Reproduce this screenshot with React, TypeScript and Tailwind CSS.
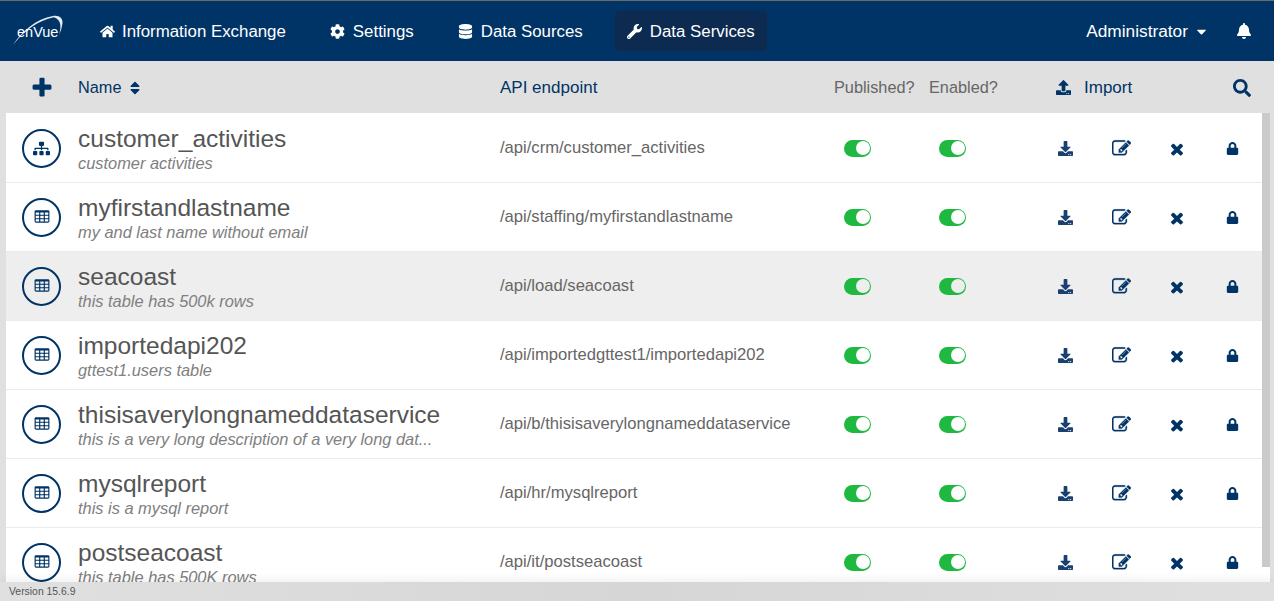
import { FaHome, FaCog, FaDatabase, FaWrench, FaBell, FaSort, FaSearch, FaUpload, FaDownload, FaLock, FaSitemap, FaCaretDown } from "react-icons/fa";

const services = [
  { name: "customer_activities", desc: "customer activities", path: "/api/crm/customer_activities", tree: true },
  { name: "myfirstandlastname", desc: "my and last name without email", path: "/api/staffing/myfirstandlastname" },
  { name: "seacoast", desc: "this table has 500k rows", path: "/api/load/seacoast", active: true },
  { name: "importedapi202", desc: "gttest1.users table", path: "/api/importedgttest1/importedapi202" },
  { name: "thisisaverylongnameddataservice", desc: "this is a very long description of a very long dat...", path: "/api/b/thisisaverylongnameddataservice" },
  { name: "mysqlreport", desc: "this is a mysql report", path: "/api/hr/mysqlreport" },
  { name: "postseacoast", desc: "this table has 500K rows", path: "/api/it/postseacoast" },
];

// older font awesome glyphs, the current packages draw these differently
function Glyph({ d, className }: { d: string; className: string }) {
  return (
    <svg viewBox="0 0 1792 1792" fill="currentColor" className={className}>
      <path d={d} />
    </svg>
  );
}

const plusPath = "M1600 736v192q0 40-28 68t-68 28h-416v416q0 40-28 68t-68 28h-192q-40 0-68-28t-28-68v-416h-416q-40 0-68-28t-28-68v-192q0-40 28-68t68-28h416v-416q0-40 28-68t68-28h192q40 0 68 28t28 68v416h416q40 0 68 28t28 68z";
const timesPath = "M1490 1322q0 40-28 68l-136 136q-28 28-68 28t-68-28l-294-294-294 294q-28 28-68 28t-68-28l-136-136q-28-28-28-68t28-68l294-294-294-294q-28-28-28-68t28-68l136-136q28-28 68-28t68 28l294 294 294-294q28-28 68-28t68 28l136 136q28 28 28 68t-28 68l-294 294 294 294q28 28 28 68z";
const editPath = "M888 1184l116-116-152-152-116 116v56h96v96h56zm440-720q-16-16-33 1l-350 350q-17 17-1 33t33-1l350-350q17-17 1-33zm80 594v190q0 119-84.5 203.5t-203.5 84.5h-832q-119 0-203.5-84.5t-84.5-203.5v-832q0-119 84.5-203.5t203.5-84.5h832q63 0 117 25 15 7 18 23 3 17-9 29l-49 49q-14 14-32 8-23-6-45-6h-832q-66 0-113 47t-47 113v832q0 66 47 113t113 47h832q66 0 113-47t47-113v-126q0-13 9-22l64-64q15-15 35-7t20 29zm-96-738l288 288-672 672h-288v-288zm444 132l-92 92-288-288 92-92q28-28 68-28t68 28l152 152q28 28 28 68t-28 68z";
const tablePath = "M576 1376v-192q0-14-9-23t-23-9h-320q-14 0-23 9t-9 23v192q0 14 9 23t23 9h320q14 0 23-9t9-23zm0-384v-192q0-14-9-23t-23-9h-320q-14 0-23 9t-9 23v192q0 14 9 23t23 9h320q14 0 23-9t9-23zm512 384v-192q0-14-9-23t-23-9h-320q-14 0-23 9t-9 23v192q0 14 9 23t23 9h320q14 0 23-9t9-23zm-512-768v-192q0-14-9-23t-23-9h-320q-14 0-23 9t-9 23v192q0 14 9 23t23 9h320q14 0 23-9t9-23zm512 384v-192q0-14-9-23t-23-9h-320q-14 0-23 9t-9 23v192q0 14 9 23t23 9h320q14 0 23-9t9-23zm512 384v-192q0-14-9-23t-23-9h-320q-14 0-23 9t-9 23v192q0 14 9 23t23 9h320q14 0 23-9t9-23zm-512-768v-192q0-14-9-23t-23-9h-320q-14 0-23 9t-9 23v192q0 14 9 23t23 9h320q14 0 23-9t9-23zm512 384v-192q0-14-9-23t-23-9h-320q-14 0-23 9t-9 23v192q0 14 9 23t23 9h320q14 0 23-9t9-23zm0-384v-192q0-14-9-23t-23-9h-320q-14 0-23 9t-9 23v192q0 14 9 23t23 9h320q14 0 23-9t9-23zm128-320v1088q0 66-47 113t-113 47h-1344q-66 0-113-47t-47-113v-1088q0-66 47-113t113-47h1344q66 0 113 47t47 113z";

function Logo() {
  return (
    <div className="relative w-[60px] h-[40px] shrink-0">
      <svg viewBox="0 0 60 40" className="absolute inset-0 w-[60px] h-[40px]" fill="none">
        <path d="M4 34 C13 20 27 8 44 5 C52 4 55 9 53 15 C52.5 18 51.5 21 50 24 C52 17 53 9 45 6.2 C29 9 14 21 4 34 Z" fill="#e6ecf3" />
      </svg>
      <span className="absolute left-[8px] top-[12px] text-[14.5px] leading-[18px] font-light text-white">enVue</span>
    </div>
  );
}

function NavItem({ icon, label, active }: { icon: React.ReactNode; label: string; active?: boolean }) {
  return (
    <div className={`flex items-center gap-[7px] h-[40px] px-3 rounded text-white text-[16.85px] ${active ? "bg-[#0d2b50]" : ""}`}>
      <span className="w-[16px] flex justify-center text-[15px]">{icon}</span>
      <span className="pt-[1px]">{label}</span>
    </div>
  );
}

function Toggle({ active }: { active?: boolean }) {
  return (
    <div className="flex items-center justify-end w-[27px] h-[17px] rounded-full bg-[#1fb840] pr-[1.5px]">
      <div className={`w-[14px] h-[14px] rounded-full ${active ? "bg-[#eeeeee]" : "bg-white"}`} />
    </div>
  );
}

export default function App() {
  return (
    <div className="relative flex flex-col w-[1274px] h-[601px] overflow-hidden bg-[#e0e0e0] font-['Liberation_Sans',Arial,sans-serif]">
      {/* top nav */}
      <div className="flex items-center h-[61px] shrink-0 bg-[#003366] border-t border-[#6b6b6b] pl-[9px] pr-[22px]">
        <Logo />
        <div className="flex items-center gap-[20px] ml-[18px]">
          <NavItem icon={<FaHome />} label="Information Exchange" />
          <NavItem icon={<FaCog />} label="Settings" />
          <NavItem icon={<FaDatabase />} label="Data Sources" />
          <NavItem icon={<FaWrench />} label="Data Services" active />
        </div>
        <div className="ml-auto flex items-center text-white text-[17.3px]">
          <span className="pt-[1px]">Administrator</span>
          <FaCaretDown className="ml-[6px] text-[15px]" />
          <FaBell className="ml-[27px] text-[16px]" />
        </div>
      </div>

      {/* toolbar */}
      <div className="flex items-center h-[52px] shrink-0 pt-[1px] text-[16.3px]">
        <div className="w-[78px] flex justify-center pl-[5px] text-[#003366]">
          <Glyph d={plusPath} className="w-[24px] h-[24px]" />
        </div>
        <div className="w-[422px] flex items-center gap-[6px] font-medium text-[#003366]">
          <span>Name</span>
          <FaSort className="text-[16px]" />
        </div>
        <div className="w-[334px] text-[17px] text-[#003366]">API endpoint</div>
        <div className="w-[95px] text-[#666666]">Published?</div>
        <div className="w-[127px] text-[#666666]">Enabled?</div>
        <div className="w-[177px] flex items-center gap-[13px] text-[17px] text-[#003366]">
          <FaUpload className="text-[15px]" />
          <span>Import</span>
        </div>
        <FaSearch className="text-[#003366] text-[18px]" />
      </div>

      {/* list */}
      <div className="flex-1 min-h-0 overflow-hidden pt-[1px] ml-[6px] mr-[4px] bg-white">
        {services.map((s) => (
          <div key={s.name} className={`flex items-center h-[69px] border-b border-[#ebebeb] ${s.active ? "bg-[#eeeeee]" : ""}`}>
            <div className="w-[72px] pl-[16px] shrink-0">
              <div className="flex items-center justify-center w-[39px] h-[39px] rounded-full border-2 border-[#003366] text-[#003366]">
                {s.tree ? <FaSitemap className="text-[17px]" /> : <Glyph d={tablePath} className="w-[16px] h-[16px]" />}
              </div>
            </div>
            <div className="w-[422px] shrink-0 pt-[1px]">
              <div className="text-[24.5px] leading-[28px] text-[#555555]">{s.name}</div>
              <div className="text-[16.4px] leading-[20px] italic text-[#808080]">{s.desc}</div>
            </div>
            <div className="w-[344px] shrink-0 text-[16.6px] text-[#666666]">{s.path}</div>
            <div className="w-[95px] shrink-0"><Toggle active={s.active} /></div>
            <div className="w-[98px] shrink-0"><Toggle active={s.active} /></div>
            <div className="w-[56px] shrink-0 flex justify-center text-[#1a4070] text-[15px]"><FaDownload /></div>
            <div className="w-[56px] shrink-0 flex justify-center text-[#003366]"><Glyph d={editPath} className="w-[19px] h-[19px] stroke-current stroke-[30]" /></div>
            <div className="w-[56px] shrink-0 flex justify-center pt-[2px] text-[#003366]"><Glyph d={timesPath} className="w-[18px] h-[18px]" /></div>
            <div className="w-[56px] shrink-0 flex justify-center -ml-[1px] text-[#003366] text-[13px]"><FaLock /></div>
          </div>
        ))}
      </div>

      {/* footer */}
      <div className="relative z-10 flex items-center h-[19px] shrink-0 pl-[9px] text-[10.4px] text-[#555555] bg-gradient-to-r from-[#e0e0e0] via-[#d6d6d6] to-[#e0e0e0] shadow-[0_-3px_8px_rgba(0,0,0,0.06)]">
        Version 15.6.9
      </div>

      {/* scrollbar thumb over the list */}
      <div className="absolute left-[1262px] top-[113px] w-[8px] h-[454px] bg-[#cacaca]" />
    </div>
  );
}
